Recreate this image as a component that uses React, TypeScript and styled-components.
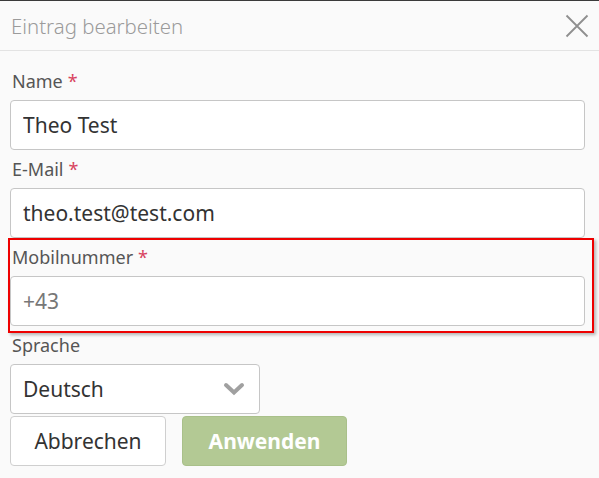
import React from "react";
import styled, { createGlobalStyle } from "styled-components";

const Global = createGlobalStyle`
  html, body {
    margin: 0;
    padding: 0;
    background: #fafafa;
  }
  body {
    font-family: "Noto Sans", "Open Sans", sans-serif;
    color: #333;
  }
  * { box-sizing: border-box; }
`;

const Dialog = styled.div`
  width: 599px;
  height: 478px;
  background: #fafafa;
  border-top: 1px solid #3a3a3a;
  overflow: hidden;
`;

const Header = styled.div`
  height: 50px;
  display: flex;
  align-items: center;
  justify-content: space-between;
  padding: 0 10px 0 11px;
  border-bottom: 1px solid #e3e3e3;
`;

const Title = styled.h2`
  margin: 0;
  font-size: 20.4px;
  font-weight: 300;
  color: #9b9b9b;
`;

const CloseButton = styled.button`
  width: 24px;
  height: 24px;
  padding: 0;
  border: 0;
  background: none;
  display: flex;
  align-items: center;
  justify-content: center;
  cursor: pointer;
`;

const Body = styled.div`
  padding: 11px 14px 0 10px;
  display: flex;
  flex-direction: column;
`;

const Field = styled.div<{ $highlight?: boolean }>`
  position: relative;
  display: flex;
  flex-direction: column;

  ${(p) =>
    p.$highlight &&
    `
    &::after {
      content: "";
      position: absolute;
      top: 0;
      left: -2px;
      right: -9px;
      bottom: -7px;
      border: 2px solid #ee0000;
      box-shadow: 2px 2px 3px rgba(0, 0, 0, 0.28);
      pointer-events: none;
    }
  `}
`;

const Label = styled.label`
  height: 38px;
  display: flex;
  align-items: center;
  padding-left: 2px;
  font-size: 18px;
  color: #555;
  gap: 5px;
`;

const Required = styled.span`
  color: #d8435f;
  font-size: 18px;
`;

const Input = styled.input<{ $muted?: boolean }>`
  height: 50px;
  width: 100%;
  border: 1px solid #c6c6c6;
  border-radius: 4px;
  background: #fff;
  padding: 0 12px;
  font-family: "Noto Sans", "Open Sans", sans-serif;
  font-size: 21px;
  color: ${(p) => (p.$muted ? "#777" : "#333")};
  outline: none;
`;

const SelectBox = styled.div`
  height: 50px;
  width: 250px;
  border: 1px solid #c6c6c6;
  border-radius: 4px;
  background: #fff;
  padding: 0 14px 0 12px;
  display: flex;
  align-items: center;
  justify-content: space-between;
  font-size: 21px;
  color: #333;
`;

const Actions = styled.div`
  display: flex;
  gap: 16px;
  margin-top: 2px;
`;

const Button = styled.button<{ $primary?: boolean }>`
  height: 50px;
  border-radius: 4px;
  font-family: "Noto Sans", "Open Sans", sans-serif;
  font-size: 21px;
  cursor: pointer;
  padding: 0;
  ${(p) =>
    p.$primary
      ? `
    width: 165px;
    background: #b3c994;
    border: 1px solid #a9c08a;
    color: #fff;
    font-weight: 700;
  `
      : `
    width: 156px;
    background: #fff;
    border: 1px solid #cfcfcf;
    color: #333;
    font-weight: 400;
  `}
`;

const CloseIcon = () => (
  <svg width="24" height="24" viewBox="0 0 24 24">
    <path d="M1.5 1.5 L22.5 22.5 M22.5 1.5 L1.5 22.5" stroke="#8f8f8f" strokeWidth="1.8" fill="none" />
  </svg>
);

const Chevron = () => (
  <svg width="22" height="14" viewBox="0 0 22 14">
    <path d="M3 3 L11 10.5 L19 3" stroke="#a0a0a0" strokeWidth="4" fill="none" strokeLinecap="round" strokeLinejoin="miter" />
  </svg>
);

export default function App() {
  return (
    <>
      <Global />
      <Dialog>
        <Header>
          <Title>Eintrag bearbeiten</Title>
          <CloseButton aria-label="Schließen">
            <CloseIcon />
          </CloseButton>
        </Header>
        <Body>
          <Field>
            <Label>
              Name<Required>*</Required>
            </Label>
            <Input defaultValue="Theo Test" />
          </Field>
          <Field>
            <Label>
              E-Mail<Required>*</Required>
            </Label>
            <Input defaultValue="theo.test@test.com" />
          </Field>
          <Field $highlight>
            <Label>
              Mobilnummer<Required>*</Required>
            </Label>
            <Input $muted defaultValue="+43" />
          </Field>
          <Field>
            <Label>Sprache</Label>
            <SelectBox>
              <span>Deutsch</span>
              <Chevron />
            </SelectBox>
          </Field>
          <Actions>
            <Button>Abbrechen</Button>
            <Button $primary>Anwenden</Button>
          </Actions>
        </Body>
      </Dialog>
    </>
  );
}
